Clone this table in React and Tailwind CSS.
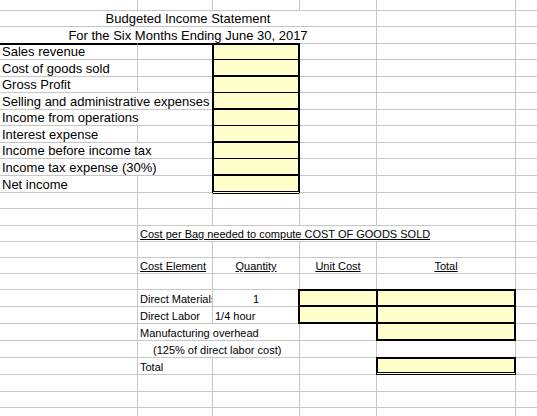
import React from "react";

const line = "border-r border-b border-[#c6c6c6]";
const big = "text-[13px] leading-[15px]";
const small = "text-[11px] leading-[13px]";
const yellow = "bg-[#ffffcc] border-black";

function Cell({ span = "", className = "", children }) {
  return (
    <div className={`flex items-end overflow-hidden whitespace-nowrap ${span} ${className}`}>
      {children}
    </div>
  );
}

function Blanks({ count }) {
  return Array.from({ length: count }, (_, i) => <div key={i} className={line} />);
}

export default function App() {
  return (
    <div className="h-[416px] w-[537px] overflow-hidden bg-white text-black font-['Liberation_Sans',Arial,sans-serif]">
      <div className="grid grid-cols-[138px_75px_87px_77px_139px_80px] grid-rows-[11px_16px_17px_16px_17px_16px_17px_16px_17px_16px_17px_17px_16px_17px_16px_16px_16px_16px_17px_17px_17px_17px_17px_17px_16px_16px]">
        {/* row 0 */}
        <Blanks count={6} />

        {/* title */}
        <Cell span="col-span-4" className={`${line} ${big} justify-center`}>Budgeted Income Statement</Cell>
        <Blanks count={2} />
        <Cell span="col-span-4" className={`${line} ${big} justify-center`}>For the Six Months Ending June 30, 2017</Cell>
        <Blanks count={2} />

        {/* income statement */}
        <Cell className={`${line} ${big} pl-0.5 -mt-px border-t-2 border-t-black`}>Sales revenue</Cell>
        <Cell className={`${line} -mt-px border-t-2 border-t-black`} />
        <div className={`${yellow} -ml-px -mt-px border-t-2 border-x-2 border-b`} />
        <Blanks count={3} />

        <Cell className={`${line} ${big} pl-0.5`}>Cost of goods sold</Cell>
        <Blanks count={1} />
        <div className={`${yellow} -ml-px border-x-2 border-b-2`} />
        <Blanks count={3} />

        <Cell className={`${line} ${big} pl-0.5`}>Gross Profit</Cell>
        <Blanks count={1} />
        <div className={`${yellow} -ml-px border-x-2 border-b`} />
        <Blanks count={3} />

        <Cell span="col-span-2" className={`${line} ${big} pl-0.5`}>Selling and administrative expenses</Cell>
        <div className={`${yellow} -ml-px border-x-2 border-b-2`} />
        <Blanks count={3} />

        <Cell span="col-span-2" className={`${line} ${big} pl-0.5`}>Income from operations</Cell>
        <div className={`${yellow} -ml-px border-x-2 border-b`} />
        <Blanks count={3} />

        <Cell className={`${line} ${big} pl-0.5`}>Interest expense</Cell>
        <Blanks count={1} />
        <div className={`${yellow} -ml-px border-x-2 border-b-2`} />
        <Blanks count={3} />

        <Cell span="col-span-2" className={`${line} ${big} pl-0.5`}>Income before income tax</Cell>
        <div className={`${yellow} -ml-px border-x-2 border-b`} />
        <Blanks count={3} />

        <Cell span="col-span-2" className={`${line} ${big} pl-0.5`}>Income tax expense (30%)</Cell>
        <div className={`${yellow} -ml-px border-x-2 border-b-2`} />
        <Blanks count={3} />

        <Cell className={`${line} ${big} pl-0.5`}>Net income</Cell>
        <Blanks count={1} />
        <div className={`${yellow} -ml-px -mb-px border-x-2 border-b-[3px] [border-bottom-style:double]`} />
        <Blanks count={3} />

        <Blanks count={12} />

        {/* cost per bag */}
        <Blanks count={1} />
        <Cell span="col-span-4" className={`${line} ${small} pl-0.5 underline`}>Cost per Bag needed to compute COST OF GOODS SOLD</Cell>
        <Blanks count={1} />

        <Blanks count={6} />

        <Blanks count={1} />
        <Cell className={`${line} ${small} pl-0.5 underline`}>Cost Element</Cell>
        <Cell className={`${line} ${small} justify-center underline`}>Quantity</Cell>
        <Cell className={`${line} ${small} justify-center underline`}>Unit Cost</Cell>
        <Cell className={`${line} ${small} justify-center underline`}>Total</Cell>
        <Blanks count={1} />

        <Blanks count={6} />

        <Blanks count={1} />
        <Cell className={`${line} ${small} pl-0.5`}>Direct Materials</Cell>
        <Cell className={`${line} ${small} justify-center`}>1</Cell>
        <div className={`${yellow} -ml-0.5 -mt-px border-t-2 border-l-2 border-b-2`} />
        <div className={`${yellow} -ml-px -mt-px border-2`} />
        <Blanks count={1} />

        <Blanks count={1} />
        <Cell className={`${line} ${small} pl-0.5`}>Direct Labor</Cell>
        <Cell className={`${line} ${small} pl-0.5`}>1/4 hour</Cell>
        <div className={`${yellow} -ml-0.5 border-l-2 border-b-2`} />
        <div className={`${yellow} -ml-px border-x-2 border-b-2`} />
        <Blanks count={1} />

        <Blanks count={1} />
        <Cell span="col-span-2" className={`${line} ${small} pl-0.5`}>Manufacturing overhead</Cell>
        <Blanks count={1} />
        <div className={`${yellow} -ml-px border-x-2 border-b-2`} />
        <Blanks count={1} />

        <Blanks count={1} />
        <Cell span="col-span-2" className={`${line} ${small} pl-[15px]`}>(125% of direct labor cost)</Cell>
        <Blanks count={3} />

        <Blanks count={1} />
        <Cell className={`${line} ${small} pl-0.5`}>Total</Cell>
        <Blanks count={2} />
        <div className={`${yellow} -ml-px -mt-px border-t-2 border-x-2 border-b-[3px] [border-bottom-style:double]`} />
        <Blanks count={1} />

        <Blanks count={18} />
      </div>
    </div>
  );
}
